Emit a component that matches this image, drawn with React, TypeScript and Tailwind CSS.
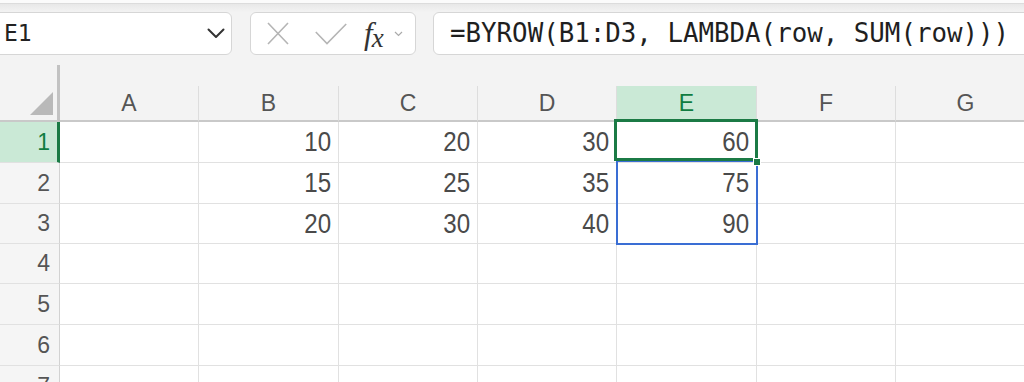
import React from "react";

const COLS = [
  { k: "A", w: "w-[139px]" },
  { k: "B", w: "w-[140px]" },
  { k: "C", w: "w-[139px]" },
  { k: "D", w: "w-[139px]" },
  { k: "E", w: "w-[140px]" },
  { k: "F", w: "w-[139px]" },
  { k: "G", w: "w-[140px]" },
];

const ROW_H = ["h-[41px]", "h-[41px]", "h-[40px]", "h-[40px]", "h-[41px]", "h-[41px]", "h-[41px]"];

const DATA: Record<number, Record<string, string>> = {
  1: { B: "10", C: "20", D: "30", E: "60" },
  2: { B: "15", C: "25", D: "35", E: "75" },
  3: { B: "20", C: "30", D: "40", E: "90" },
};

function Cell({ row, col, w }: { row: number; col: string; w: string }) {
  const v = DATA[row]?.[col];
  return (
    <div
      className={`${w} shrink-0 relative flex items-center justify-end pr-[7px] border-r border-b border-[#e1e1e1] bg-white font-['Liberation_Sans',sans-serif] text-[28px] leading-none text-[#4a4a4a]`}
    >
      {v && <span className="inline-block scale-x-[0.86] origin-right">{v}</span>}
      {row === 1 && col === "E" && (
        <>
          <div className="absolute -left-[3px] -right-[2px] -top-[3px] bottom-[1px] border-[3px] border-[#1b7a45] z-10 pointer-events-none" />
          <div className="absolute -right-[5px] -bottom-[4px] w-[8px] h-[8px] bg-[#1b7a45] border border-white z-20" />
        </>
      )}
      {row === 2 && col === "E" && (
        <div className="absolute -left-[1px] -top-[3px] w-[142px] h-[85px] border-2 border-[#3a6ed4] z-[5] pointer-events-none" />
      )}
    </div>
  );
}

export default function App() {
  return (
    <div className="w-[1024px] h-[382px] overflow-hidden bg-[#f3f3f3] font-['Liberation_Sans',sans-serif]">
      {/* top strip */}
      <div className="h-[3px] bg-[#fbfbfb]" />
      <div className="h-[1px] bg-[#dcdcdc]" />
      <div className="h-[8px] bg-linear-to-b from-[#e8e8e8] to-[#f3f3f3]" />

      {/* formula bar row */}
      <div className="flex h-[43px]">
        <div className="-ml-[10px] w-[242px] shrink-0 rounded-[6px] border border-[#d6d6d6] bg-white flex items-center justify-between pl-[13px] pr-[6px]">
          <span className="font-['DejaVu_Sans_Mono',monospace] text-[23px] text-[#222] leading-none">E1</span>
          <svg width="18" height="11" viewBox="0 0 18 11" fill="none">
            <path d="M1.5 1.5 L9 9 L16.5 1.5" stroke="#333" strokeWidth="2" strokeLinecap="round" strokeLinejoin="round" />
          </svg>
        </div>

        <div className="ml-[18px] w-[166px] shrink-0 rounded-[6px] border border-[#d6d6d6] bg-white flex items-center pl-[16px]">
          <svg width="22" height="23" viewBox="0 0 22 23" fill="none">
            <path d="M1 1 L21 22 M21 1 L1 22" stroke="#b5b5b5" strokeWidth="1.6" />
          </svg>
          <svg className="ml-[26px]" width="32" height="22" viewBox="0 0 32 22" fill="none">
            <path d="M0.8 9 L12 20.5 L31.2 1" stroke="#b5b5b5" strokeWidth="1.6" />
          </svg>
          <span className="ml-[17px] flex items-baseline font-['Liberation_Serif',serif] italic text-[#333] leading-none">
            <span className="text-[31px]">f</span>
            <span className="text-[27px] -ml-[1px] relative top-[3px]">x</span>
          </span>
          <svg className="ml-[10px]" width="9" height="6" viewBox="0 0 9 6" fill="none">
            <path d="M1 1 L4.5 4.5 L8 1" stroke="#aaa" strokeWidth="1.2" />
          </svg>
        </div>

        <div className="ml-[17px] w-[640px] shrink-0 rounded-[6px] border border-[#d6d6d6] bg-white flex items-center pl-[16px]">
          <span className="font-['DejaVu_Sans_Mono',monospace] text-[25.8px] text-[#1f1f1f] leading-none whitespace-pre">
            =BYROW(B1:D3, LAMBDA(row, SUM(row)))
          </span>
        </div>
      </div>

      <div className="h-[10px]" />

      {/* column headers */}
      <div className="flex items-end">
        <div className="w-[60px] h-[57px] shrink-0 border-r-[3px] border-r-[#c2c2c2] border-b-2 border-b-[#c9c9c9] flex items-end justify-end pr-[4px] pb-[5px]">
          <svg width="23" height="23" viewBox="0 0 23 23">
            <polygon points="23,0 23,23 0,23" fill="#b9b9b9" />
          </svg>
        </div>
        {COLS.map((c) => (
          <div
            key={c.k}
            className={`${c.w} shrink-0 h-[36px] border-b-2 border-b-[#c9c9c9] border-r border-r-[#dddddd] flex items-center justify-center text-[23px] leading-none ${
              c.k === "E" ? "bg-[#cae9d6] text-[#107c41]" : "text-[#555]"
            }`}
          >
            {c.k}
          </div>
        ))}
      </div>

      {/* rows */}
      {ROW_H.map((h, i) => {
        const r = i + 1;
        return (
          <div key={r} className={`flex ${h}`}>
            <div
              className={`w-[60px] shrink-0 flex items-center justify-end pr-[7px] border-b border-b-[#e1e1e1] text-[23px] leading-none ${
                r === 1
                  ? "bg-[#cae9d6] text-[#107c41] border-r-[3px] border-r-[#1b7a45]"
                  : "bg-[#f5f5f5] text-[#555] border-r border-r-[#d2d2d2] pr-[9px]"
              }`}
            >
              {r}
            </div>
            {COLS.map((c) => (
              <Cell key={c.k} row={r} col={c.k} w={c.w} />
            ))}
          </div>
        );
      })}
    </div>
  );
}
